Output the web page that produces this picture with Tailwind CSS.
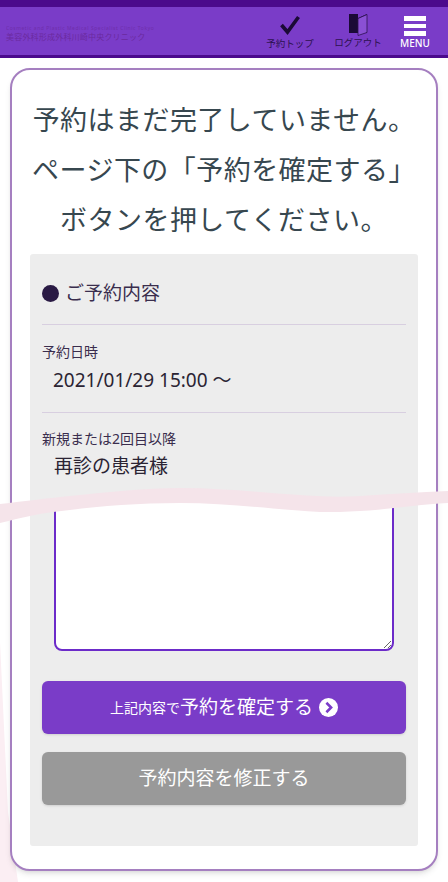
<!DOCTYPE html>
<html lang="ja">
<head>
    <meta charset="UTF-8">
    <meta name="viewport" content="width=device-width, initial-scale=1.0">
    <title>予約内容の確認</title>
    <script src="https://cdn.jsdelivr.net/npm/@tailwindcss/browser@4"></script>
</head>
<body class="bg-white font-['Noto_Sans','Noto_Sans_CJK_JP',sans-serif]">
    <div class="relative h-[882px] w-[448px] overflow-hidden">
        <!-- faint pink left in the page corner -->
        <svg class="absolute left-0 bottom-0 w-[40px] h-[240px]" viewBox="0 0 40 240">
            <path d="M0 0 L8 170 L18 240 L0 240 Z" fill="#fbeef3"/>
        </svg>

        <!-- Header -->
        <header class="relative h-[58px] border-t-[7px] border-b-[3px] border-t-[#4b0a8c] border-b-[#4b0a8c] bg-[#7a3cc8] flex items-start justify-between">
            <div class="pl-[6px] pt-[18px] text-[#6a2a9e]">
                <p class="text-[5px] leading-[7px] tracking-[0.55px] whitespace-nowrap opacity-70">Cosmetic and Plastic Medical Specialist Clinic Tokyo</p>
                <p class="text-[8px] leading-[10px] tracking-[0.2px] whitespace-nowrap">美容外科形成外科川崎中央クリニック</p>
            </div>
            <nav class="flex items-start pr-[18px]">
                <div class="w-[48px] flex flex-col items-center">
                    <svg class="w-[22px] h-[22px] mt-[7px]" viewBox="0 0 22 22"><path d="M2.5 11 L8.5 18 L19.5 3" fill="none" stroke="#1b0a36" stroke-width="3.6"/></svg>
                    <span class="text-[9.5px] leading-[12px] text-[#2d1250] whitespace-nowrap mt-[2px]">予約トップ</span>
                </div>
                <div class="w-[48px] ml-[20px] flex flex-col items-center">
                    <svg class="w-[22px] h-[24px] mt-[6px]" viewBox="0 0 22 24"><path d="M2 1 H20 V20 H9 V6 L20 1 Z" fill="#1b0a36"/><path d="M2 1 H11 V20 H2 Z" fill="#1b0a36"/><path d="M11 5.5 L20 1.5 V19.5 L11 22.5 Z" fill="#8a50d4" stroke="#2d1250" stroke-width="0.8"/></svg>
                    <span class="text-[9.5px] leading-[12px] text-[#2d1250] whitespace-nowrap">ログアウト</span>
                </div>
                <div class="w-[30px] ml-[18px] flex flex-col items-center">
                    <div class="w-[22px] flex flex-col gap-[3px] mt-[9px] mb-[1px]">
                        <span class="h-[5px] bg-white"></span>
                        <span class="h-[4px] bg-white"></span>
                        <span class="h-[5px] bg-white"></span>
                    </div>
                    <span class="text-[10px] leading-[12px] text-white font-medium">MENU</span>
                </div>
            </nav>
        </header>

        <!-- Card -->
        <main class="relative mx-[10px] mt-[10px] h-[803px] border-2 border-[#a57fc0] rounded-[20px] bg-white px-[18px] shadow-md flex flex-col">
            <h1 class="pt-[25px] text-[27px] leading-[50px] text-center text-[#37474f] tracking-[0.45px] whitespace-nowrap -mx-[18px]">
                予約はまだ完了していません。<br>ページ下の「予約を確定する」<br>ボタンを押してください。
            </h1>
            <section class="mt-[9px] h-[592px] bg-[#ededed] rounded-[3px] px-[12px] flex flex-col">
                <h2 class="h-[71px] flex items-center gap-[6px] pt-[8px] border-b border-[#d8cfe0] text-[19px] text-[#3a2d4d]">
                    <span class="w-[17px] h-[17px] rounded-full bg-[#2a1a44]"></span>ご予約内容
                </h2>
                <div class="h-[88px] pt-[17px] border-b border-[#d8cfe0]">
                    <p class="text-[14px] leading-[20px] text-[#3a2d4d]">予約日時</p>
                    <p class="text-[19px] leading-[36px] pl-[11px] text-[#2b2433]">2021/01/29 15:00 〜</p>
                </div>
                <div class="pt-[16px]">
                    <p class="text-[14px] leading-[20px] text-[#3a2d4d]">新規または2回目以降</p>
                    <p class="text-[19px] leading-[35px] pl-[12px] text-[#2b2433]">再診の患者様</p>
                </div>
                <textarea class="mx-[12px] mt-[16px] h-[151px] shrink-0 border-2 border-[#6c2bc9] rounded-[8px] bg-white"></textarea>
                <button class="mt-[30px] h-[53px] shrink-0 rounded-[6px] bg-[#7a3cc8] text-white shadow flex items-center justify-center">
                    <span class="text-[14px]">上記内容で</span><span class="text-[19px]">予約を確定する</span>
                    <svg class="w-[19px] h-[19px] ml-[6px]" viewBox="0 0 18 18"><circle cx="9" cy="9" r="9" fill="white"/><path d="M7 4.5 L11.5 9 L7 13.5" fill="none" stroke="#7a3cc8" stroke-width="2.4"/></svg>
                </button>
                <button class="mt-[18px] h-[53px] shrink-0 rounded-[6px] bg-[#999999] text-white text-[19px] shadow">予約内容を修正する</button>
            </section>
        </main>

        <!-- torn edge between the two stitched captures -->
        <svg class="absolute left-0 top-[480px] w-[448px] h-[60px]" viewBox="0 0 448 60">
            <path d="M0 24 C25 21 50 18 70 16 C110 12 145 8 180 8 C225 8 265 13 300 15 C330 17 345 17 360 16 C390 14 420 12 448 11 L448 23 C420 24 395 29 360 31 C345 32 335 32 320 32 C280 30 230 23 180 23 C140 23 100 26 70 30 C40 33 20 38 0 43 Z" fill="#f5e4ea"/>
        </svg>
    </div>
</body>
</html>
